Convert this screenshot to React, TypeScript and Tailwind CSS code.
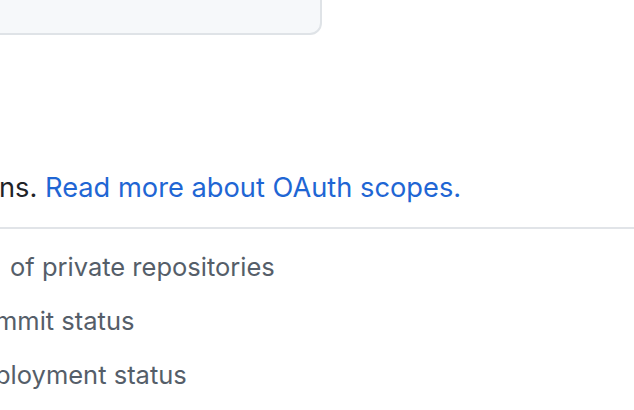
import React from "react";

export default function App() {
  const font = { fontFamily: "Inter, 'Noto Sans', sans-serif" };
  return (
    <div className="w-[634px] h-[410px] overflow-hidden bg-white" style={font}>
      <div className="-mt-[40px] -ml-[20px] w-[342px] h-[75px] rounded-[12px] border-2 border-[#dfe3e7] bg-[#f6f8fa]" />
      <div className="mt-[134px] h-[38px] leading-[38px] text-[27.25px] whitespace-nowrap text-[#1f2328]">
        <span className="inline-block -ml-[1px]">ns.</span>{" "}
        <a className="text-[#1f66d4]">Read more about OAuth scopes.</a>
      </div>
      <div className="mt-[20px] h-[2px] bg-[#e1e4e8]" />
      <ul className="mt-[11px] text-[25.5px] leading-[54px] text-[#555e69] whitespace-nowrap">
        <li className="pl-[10px]">of private repositories</li>
        <li className="-ml-[5px]">mmit status</li>
        <li className="-ml-[5px]">ployment status</li>
      </ul>
    </div>
  );
}
